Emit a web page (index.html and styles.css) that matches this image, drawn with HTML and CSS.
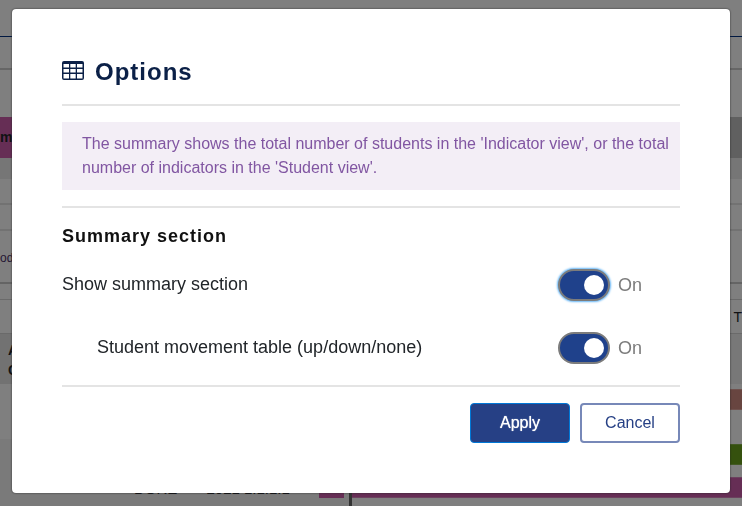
FILE: index.html
```
<!DOCTYPE html>
<html lang="en">
<head>
<meta charset="utf-8">
<meta name="viewport" content="width=device-width, initial-scale=1">
<title>Options</title>
<link rel="stylesheet" href="styles.css">
</head>
<body>
<div class="report" aria-hidden="true">
  <div class="top-bar"></div>
  <div class="tool-bar"></div>
  <div class="space"></div>
  <div class="band"><strong class="band-name">me</strong></div>
  <div class="filters"></div>
  <div class="line-row"></div>
  <div class="line-row"></div>
  <div class="dates"><span>oda</span></div>
  <div class="thin-row"></div>
  <div class="tab-row"><span>T</span></div>
  <div class="results">
    <div class="names">
      <div class="group"><strong>A<br>C</strong></div>
      <div class="blank"></div>
      <div class="student"><span>DORE</span><span>2021 1.1.1.1</span><span class="mark"></span></div>
    </div>
    <div class="bars">
      <div class="bars-head"></div>
      <div class="bar salmon"></div>
      <div class="bar green"></div>
      <div class="bar purple"></div>
    </div>
  </div>
</div>
<div class="overlay">
  <form class="dialog" role="dialog" aria-modal="true" aria-labelledby="title">
    <h1 class="title" id="title">
      <svg class="table-icon" viewBox="0 0 22 19" aria-hidden="true">
        <path fill="currentColor" fill-rule="evenodd" d="M2 0H20Q22 0 22 2V17Q22 19 20 19H2Q0 19 0 17V2Q0 0 2 0ZM1.500 3V6.500H7V3ZM8.300 3V6.500H13.700V3ZM15 3V6.500H20.500V3ZM1.500 8V11.500H7V8ZM8.300 8V11.500H13.700V8ZM15 8V11.500H20.500V8ZM1.500 13V17.500H7V13ZM8.300 13V17.500H13.700V13ZM15 13V17.500H20.500V13Z"/>
      </svg>
      <span>Options</span>
    </h1>
    <p class="note">The summary shows the total number of students in the 'Indicator view', or the total number of indicators in the 'Student view'.</p>
    <section class="settings">
      <h2 class="heading">Summary section</h2>
      <div class="setting">
        <label for="summary">Show summary section</label>
        <span class="control"><input class="switch focused" id="summary" type="checkbox" role="switch" checked><span>On</span></span>
      </div>
      <div class="setting">
        <label class="nested" for="movement">Student movement table (up/down/none)</label>
        <span class="control"><input class="switch" id="movement" type="checkbox" role="switch" checked><span>On</span></span>
      </div>
    </section>
    <div class="actions">
      <button class="button primary" type="submit">Apply</button>
      <button class="button" type="button">Cancel</button>
    </div>
  </form>
</div>
</body>
</html>
```
FILE: styles.css
```
* { box-sizing: border-box; }
body {
  margin: 0;
  min-height: 100vh;
  overflow: hidden;
  background: #fff;
  color: #212529;
  font-family: "Liberation Sans", Arial, sans-serif;
}

/* Report page behind the dialog */
.report { height: 100vh; overflow: hidden; font-size: 12px; }
.top-bar { height: 37px; border-bottom: 1px solid #003082; }
.tool-bar { height: 33px; border-bottom: 2px solid #ccc; }
.space { height: 47px; }
.band { display: flex; align-items: center; height: 41px; background: #c0c0c0; }
.band-name { width: 50%; line-height: 41px; background: #cc5caa; font-size: 14px; }
.filters { height: 21px; background: #ececec; }
.line-row { height: 26px; border-bottom: 2px solid #e4e4e4; }
.dates {
  height: 53px;
  padding-top: 20px;
  border-bottom: 2px solid #c8c8c8;
  color: #4b306a;
}
.thin-row { height: 16px; border-bottom: 1px solid #d4d4d4; }
.tab-row {
  display: flex;
  justify-content: flex-end;
  align-items: center;
  height: 34px;
  border-bottom: 1px solid #d4d4d4;
  font-size: 14px;
}
.results { display: grid; grid-template-columns: 352px 1fr; }
.names { border-right: 3px solid #666; background: #f4f4f4; }
.group { height: 50px; padding: 6px 8px; background: #e4e4e4; font-size: 14px; line-height: 20px; }
.blank { height: 55px; background: #fff; }
.student {
  display: flex;
  justify-content: space-between;
  align-items: flex-end;
  height: 67px;
  padding: 0 5px 8px 134px;
  font-size: 15px;
  line-height: 18px;
  white-space: nowrap;
}
.mark { flex: none; width: 25px; height: 20px; background: #cc5caa; }
.bars-head { height: 50px; background: #f1f1f1; }
.bar { height: 21px; border: solid transparent; border-width: 1px 0; }
.salmon { margin-top: 5px; background: #d08a80; border-color: #e0a49c; }
.green { margin-top: 34px; background: #6ba21c; border-color: #86b448; }
.purple { margin-top: 12px; background: #cc5caa; border-color: #d884be; }

/* Dialog */
.overlay {
  position: fixed;
  inset: 0;
  padding: 9px 12px;
  background: rgba(0, 0, 0, .5);
}
.dialog {
  padding: 50px;
  border-radius: 4px;
  background: #fff;
  box-shadow: 0 0 2px #222;
}
.title {
  display: flex;
  align-items: flex-start;
  gap: 11px;
  margin: 0;
  padding-bottom: 19px;
  border-bottom: 2px solid #e4e4e4;
  color: #0b2047;
  font-size: 24px;
  line-height: 26px;
  letter-spacing: 1px;
}
.table-icon { width: 22px; height: 19px; margin-top: 2px; }
.note {
  margin: 16px 0;
  padding: 10px 10px 10px 20px;
  background: #f3eef6;
  color: #8156a2;
  font-size: 16px;
  line-height: 24px;
}
.settings {
  padding: 16px 0 21px;
  border: solid #e4e4e4;
  border-width: 2px 0;
}
.heading {
  margin: 0 0 19px;
  color: #111;
  font-size: 18px;
  line-height: 24px;
  letter-spacing: 1px;
}
.setting {
  display: flex;
  justify-content: space-between;
  align-items: flex-end;
  font-size: 18px;
  line-height: 34px;
}
.setting + .setting { margin-top: 29px; }
.nested { padding-left: 35px; }
.control {
  display: flex;
  align-items: center;
  gap: 8px;
  width: 122px;
  padding-top: 2px;
  color: #7c7c7c;
  line-height: 32px;
}
.switch {
  appearance: none;
  display: flex;
  justify-content: flex-end;
  align-items: center;
  width: 52px;
  height: 32px;
  margin: 0;
  padding: 0 4px;
  border: 2px solid #7c7c7c;
  border-radius: 16px;
  background: #1f418b;
}
.switch::before {
  content: "";
  width: 20px;
  height: 20px;
  border-radius: 50%;
  background: #fff;
}
.switch:not(:checked) { justify-content: flex-start; background: #999; }
.focused { box-shadow: 0 0 2px 1px #64b5f6; }
.actions { display: flex; justify-content: flex-end; gap: 10px; margin-top: 16px; }
.button {
  width: 100px;
  height: 40px;
  padding: 0;
  border: 2px solid #7788b8;
  border-radius: 4px;
  background: #fff;
  color: #264085;
  font: 16px "Liberation Sans", Arial, sans-serif;
}
.primary { border: 1px solid #0078d7; background: #264085; color: #fff; text-shadow: 0 0 1px #fff; }
```
